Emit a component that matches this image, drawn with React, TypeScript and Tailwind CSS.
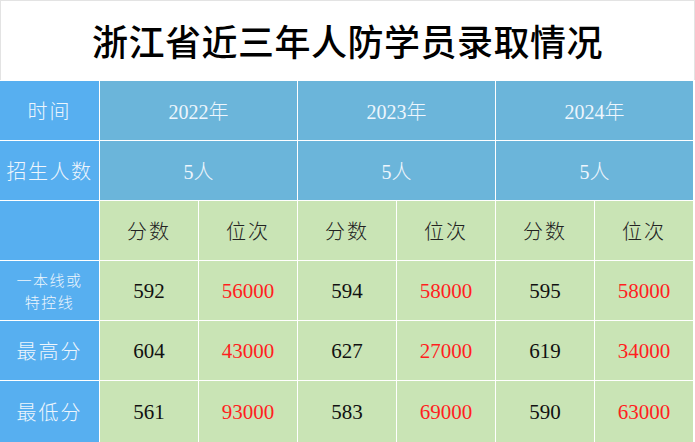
const years = [
  { year: '2022年', quota: '5人' },
  { year: '2023年', quota: '5人' },
  { year: '2024年', quota: '5人' },
]

const rows = [
  { label: ['一本线或', '特控线'], cells: ['592', '56000', '594', '58000', '595', '58000'] },
  { label: ['最高分'], cells: ['604', '43000', '627', '27000', '619', '34000'] },
  { label: ['最低分'], cells: ['561', '93000', '583', '69000', '590', '63000'] },
]

const font = "font-['Liberation_Serif','Noto_Sans_CJK_SC',serif]"

export default function App() {
  return (
    <div className={`w-[695px] h-[442px] overflow-hidden bg-white ${font}`}>
      {/* Title */}
      <div className="h-[80px] border-t border-x border-[#e3e3e3] flex items-center justify-center">
        <h1 className="text-[36px] leading-none text-black tracking-[0.5px] font-medium pt-[6px]">
          浙江省近三年人防学员录取情况
        </h1>
      </div>

      {/* Table */}
      <div className="mt-px w-[693px] grid grid-cols-[99px_repeat(6,98px)] grid-rows-[59px_59px_59px_59px_59px_61px] gap-px bg-white font-light">
        {/* Row: 时间 */}
        <div className="bg-[#57aff0] flex items-center justify-center pt-[3px] text-[20px] text-[#eef6fd] tracking-[2px]">
          时间
        </div>
        {years.map((y) => (
          <div
            key={y.year}
            className="col-span-2 bg-[#6bb5da] flex items-center justify-center pt-[3px] text-[20px] text-[#eef6fd]"
          >
            {y.year}
          </div>
        ))}

        {/* Row: 招生人数 */}
        <div className="bg-[#57aff0] flex items-center justify-center pt-[3px] text-[20px] text-[#eef6fd] tracking-[1.5px]">
          招生人数
        </div>
        {years.map((y) => (
          <div
            key={y.year + 'q'}
            className="col-span-2 bg-[#6bb5da] flex items-center justify-center pt-[3px] text-[20px] text-[#eef6fd]"
          >
            {y.quota}
          </div>
        ))}

        {/* Row: sub headers */}
        <div className="bg-[#57aff0]" />
        {years.map((y) => (
          <>
            <div
              key={y.year + 's'}
              className="bg-[#c9e4b5] flex items-center justify-center pt-[3px] text-[20px] text-[#222] tracking-[2px]"
            >
              分数
            </div>
            <div
              key={y.year + 'r'}
              className="bg-[#c9e4b5] flex items-center justify-center pt-[3px] text-[20px] text-[#222] tracking-[2px]"
            >
              位次
            </div>
          </>
        ))}

        {/* Data rows */}
        {rows.map((r) => (
          <>
            <div
              key={r.label[0]}
              className={`bg-[#57aff0] flex flex-col items-center justify-center pt-[3px] text-[#eef6fd] ${
                r.label.length > 1 ? 'text-[15px] leading-[22px] tracking-[1.5px]' : 'text-[20px] tracking-[2px]'
              }`}
            >
              {r.label.map((l) => (
                <span key={l}>{l}</span>
              ))}
            </div>
            {r.cells.map((c, i) => (
              <div
                key={r.label[0] + i}
                className={`bg-[#c9e4b5] flex items-center justify-center pt-[3px] text-[21px] font-normal ${
                  i % 2 === 1 ? 'text-[#ff1f1f]' : 'text-[#111]'
                }`}
              >
                {c}
              </div>
            ))}
          </>
        ))}
      </div>
    </div>
  )
}
